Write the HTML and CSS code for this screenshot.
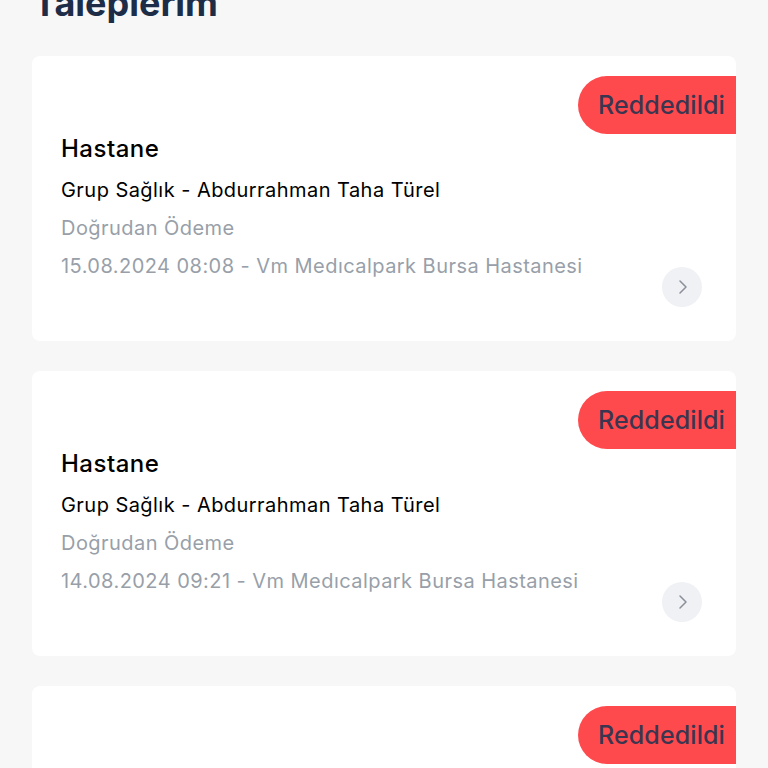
FILE: index.html
```html
<!DOCTYPE html>
<html lang="tr">
<head>
<meta charset="utf-8">
<link rel="stylesheet" href="styles.css">
</head>
<body>
<main class="page">
  <h1 class="title">Taleplerim</h1>
  <section class="list">
    <article class="card">
      <div class="card-head"><span class="badge">Reddedildi</span></div>
      <div class="card-body">
        <div class="info">
          <div class="type">Hastane</div>
          <div class="line">Grup Sağlık - Abdurrahman Taha Türel</div>
          <div class="line muted">Doğrudan Ödeme</div>
          <div class="line muted">15.08.2024 08:08 - Vm Medıcalpark Bursa Hastanesi</div>
        </div>
        <button class="go" aria-label="Detay">
          <svg viewBox="0 0 20 20" width="20" height="20"><path d="M8 4 L14 10 L8 16" fill="none" stroke="#8a8f99" stroke-width="1.5" stroke-linecap="round" stroke-linejoin="round"/></svg>
        </button>
      </div>
    </article>
    <article class="card">
      <div class="card-head"><span class="badge">Reddedildi</span></div>
      <div class="card-body">
        <div class="info">
          <div class="type">Hastane</div>
          <div class="line">Grup Sağlık - Abdurrahman Taha Türel</div>
          <div class="line muted">Doğrudan Ödeme</div>
          <div class="line muted">14.08.2024 09:21 - Vm Medıcalpark Bursa Hastanesi</div>
        </div>
        <button class="go" aria-label="Detay">
          <svg viewBox="0 0 20 20" width="20" height="20"><path d="M8 4 L14 10 L8 16" fill="none" stroke="#8a8f99" stroke-width="1.5" stroke-linecap="round" stroke-linejoin="round"/></svg>
        </button>
      </div>
    </article>
    <article class="card">
      <div class="card-head"><span class="badge">Reddedildi</span></div>
      <div class="card-body">
        <div class="info">
          <div class="type">Hastane</div>
          <div class="line">Grup Sağlık - Abdurrahman Taha Türel</div>
          <div class="line muted">Doğrudan Ödeme</div>
          <div class="line muted">13.08.2024 10:15 - Vm Medıcalpark Bursa Hastanesi</div>
        </div>
        <button class="go" aria-label="Detay">
          <svg viewBox="0 0 20 20" width="20" height="20"><path d="M8 4 L14 10 L8 16" fill="none" stroke="#8a8f99" stroke-width="1.5" stroke-linecap="round" stroke-linejoin="round"/></svg>
        </button>
      </div>
    </article>
  </section>
</main>
</body>
</html>
```
FILE: styles.css
```css
html, body {
  margin: 0;
  padding: 0;
  background: #f7f7f8;
}
body {
  font-family: Inter, "Noto Sans", sans-serif;
  overflow: hidden;
  height: 768px;
}
.page {
  padding: 0 32px;
}
.title {
  margin: -19px 0 0 1px;
  font-size: 36px;
  line-height: 44px;
  font-weight: 700;
  color: #1e2d47;
  letter-spacing: 0;
}
.list {
  display: flex;
  flex-direction: column;
  gap: 30px;
  margin-top: 31px;
}
.card {
  background: #ffffff;
  border-radius: 8px;
  padding: 20px 34px 34px 29px;
  overflow: hidden;
}
.card-head {
  display: flex;
  justify-content: flex-end;
  margin-right: -34px;
}
.badge {
  display: flex;
  align-items: center;
  height: 58px;
  padding: 0 11px 0 20px;
  background: #ff4a4d;
  color: #3b3550;
  font-size: 25px;
  font-weight: 500;
  letter-spacing: 0.1px;
  border-radius: 29px 0 0 29px;
}
.card-body {
  display: flex;
  align-items: flex-end;
}
.info {
  flex: 1;
  padding-bottom: 22px;
}
.type {
  font-size: 24px;
  line-height: 30px;
  font-weight: 500;
  letter-spacing: 0.5px;
  color: #000000;
  margin-bottom: 7px;
}
.line {
  font-size: 20px;
  line-height: 38px;
  letter-spacing: 0.45px;
  color: #000000;
}
.muted {
  color: #989fa9;
}
.go {
  width: 40px;
  height: 40px;
  border: none;
  border-radius: 50%;
  background: #eff1f5;
  display: flex;
  align-items: center;
  justify-content: center;
  padding: 0;
  flex: none;
}
.go svg {
  display: block;
}
```
